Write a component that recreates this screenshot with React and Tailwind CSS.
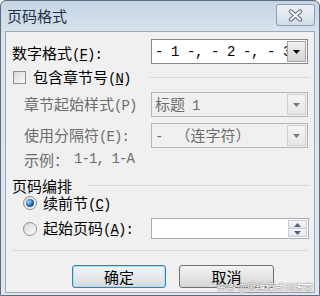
import React from "react";

const CJK = "font-['Noto_Sans_CJK_SC',sans-serif]";

function Lat({ children, className = "", wide = false }) {
  return (
    <span
      className={`font-['Liberation_Mono',monospace] text-[14px] ${wide ? "tracking-[-0.4px]" : "tracking-[-0.9px]"} ${className}`}
    >
      {children}
    </span>
  );
}

function Arrow({ color }) {
  return (
    <svg width="7" height="4" viewBox="0 0 7 4">
      <path d="M0 0h7L3.5 4z" fill={color} />
    </svg>
  );
}

function Combo({ children, disabled }) {
  return (
    <div
      className={`flex h-[25px] w-[157px] items-stretch border p-px ${
        disabled ? "border-[#b5b5b5] bg-[#f0f0f0] text-[#6d6d6d]" : "border-[#828790] bg-white text-black"
      }`}
    >
      <div className="flex min-w-0 flex-1 items-center overflow-hidden whitespace-nowrap pl-[2px]">{children}</div>
      <div
        className={`flex w-[19px] items-center justify-center border ${
          disabled
            ? "border-[#d0d0d0] bg-gradient-to-b from-[#f6f6f6] to-[#e6e6e6]"
            : "border-[#a3a3a3] bg-gradient-to-b from-[#f2f2f2] to-[#d3d3d3]"
        }`}
      >
        <Arrow color={disabled ? "#7a7a7a" : "#000"} />
      </div>
    </div>
  );
}

function Radio({ checked }) {
  return (
    <span className="flex h-[14px] w-[14px] shrink-0 items-center justify-center rounded-full border border-[#8c8f94] bg-gradient-to-br from-[#d8d8d8] to-[#fbfbfb]">
      {checked ? (
        <span className="h-[8px] w-[8px] rounded-full bg-[radial-gradient(circle_at_35%_35%,#9fd8ff,#1e64ad_55%,#0c3769)]" />
      ) : null}
    </span>
  );
}

function Check() {
  return (
    <span className="ml-px h-[13px] w-[13px] shrink-0 border border-[#8e8f8f] bg-gradient-to-br from-[#d9d9d9] to-[#fafafa]" />
  );
}

function Spinner() {
  return (
    <div className="flex w-[19px] flex-col">
      <div className="flex flex-1 items-center justify-center border border-[#c9ccd3] bg-gradient-to-b from-[#f8f8f8] to-[#e4e6ea]">
        <svg width="7" height="4" viewBox="0 0 7 4">
          <path d="M0 4h7L3.5 0z" fill="#4c5f83" />
        </svg>
      </div>
      <div className="flex flex-1 items-center justify-center border border-t-0 border-[#c9ccd3] bg-gradient-to-b from-[#f8f8f8] to-[#e4e6ea]">
        <Arrow color="#4c5f83" />
      </div>
    </div>
  );
}

export default function App() {
  return (
    <div className={`relative h-[296px] w-[320px] overflow-hidden ${CJK} text-[15px] leading-none text-black`}>
      <div className="flex h-full flex-col rounded-t-[6px] border border-[#5d6b7c] bg-gradient-to-b from-[#c6d5e6] via-[#dae3ed] via-[11%] to-[#dfe6ee] px-[4px] pb-[2px]">
        <div className="flex h-[30px] items-start justify-between">
          <span className="ml-[2px] mt-[7px] text-[15px] text-[#1f2f44]">页码格式</span>
          <button className="mt-[3px] flex h-[22px] w-[39px] items-center justify-center rounded-[3px] border border-[#8e9cb0] bg-gradient-to-b from-[#eef2f7] to-[#d3dde9]">
            <svg width="15" height="13" viewBox="0 0 15 13">
              <path d="M3 2.5l9 8M12 2.5l-9 8" stroke="#5b6a80" strokeWidth="4.2" strokeLinecap="round" />
              <path d="M3 2.5l9 8M12 2.5l-9 8" stroke="#ffffff" strokeWidth="2.2" strokeLinecap="round" />
            </svg>
          </button>
        </div>

        <div className="flex flex-1 flex-col border border-[#9faab8] bg-[#f0f0f0] px-[6px] pt-[7px]">
          <div className="flex h-[25px] items-center justify-between">
            <span className="pt-[3px]">
              数字格式<Lat>(<u>F</u>):</Lat>
            </span>
            <Combo>
              <Lat wide>- 1 -, - 2 -, - 3 -</Lat>
            </Combo>
          </div>

          <div className="flex h-[27px] items-center">
            <Check />
            <span className="ml-[7px]">
              包含章节号<Lat>(<u>N</u>)</Lat>
            </span>
            <div className="-mr-[2px] ml-auto h-px w-[160px] bg-[#d9d9d9]" />
          </div>

          <div className="mt-px flex h-[25px] items-center justify-between text-[#6d6d6d]">
            <span className="ml-[12px]">
              章节起始样式<Lat>(P)</Lat>
            </span>
            <Combo disabled>
              <span>
                标题<Lat className="ml-[7px]">1</Lat>
              </span>
            </Combo>
          </div>

          <div className="mt-[6px] flex h-[25px] items-center justify-between text-[#6d6d6d]">
            <span className="ml-[12px]">
              使用分隔符<Lat>(E):</Lat>
            </span>
            <Combo disabled>
              <span>
                <Lat>-</Lat>
                <span className="ml-[13px]">（连字符）</span>
              </span>
            </Combo>
          </div>

          <div className="mt-px flex h-[20px] items-center pl-[12px] text-[#6d6d6d]">
            <span>示例：</span>
            <Lat className="ml-[5px]">1-1, 1-A</Lat>
          </div>

          <div className="mt-[6px] flex h-[20px] items-center">
            <span>页码编排</span>
            <div className="-mr-[2px] ml-[15px] h-px flex-1 bg-[#d9d9d9]" />
          </div>

          <div className="flex h-[16px] items-center pl-[11px]">
            <Radio checked />
            <span className="ml-[6px]">
              续前节<Lat>(<u>C</u>)</Lat>
            </span>
          </div>

          <div className="mt-[7px] flex h-[21px] items-center justify-between">
            <div className="flex items-center pl-[11px]">
              <Radio />
              <span className="ml-[6px]">
                起始页码<Lat>(<u>A</u>):</Lat>
              </span>
            </div>
            <div className="-mr-px flex h-[21px] w-[158px] border border-[#a5acb5] bg-white p-px">
              <div className="flex-1" />
              <Spinner />
            </div>
          </div>

          <div className="mx-px mt-[11px] h-px bg-[#d9d9d9]" />

          <div className="ml-[60px] mt-[14px] flex gap-[13px]">
            <button className="flex h-[23px] w-[94px] items-center justify-center rounded-[3px] border border-[#3c7fb1] bg-gradient-to-b from-[#f4f6f8] to-[#d5dbe1] shadow-[inset_0_0_0_1px_#a9dcf7]">
              确定
            </button>
            <button className="flex h-[23px] w-[95px] items-center justify-center rounded-[3px] border border-[#707070] bg-gradient-to-b from-[#f3f3f3] to-[#d6d6d6]">
              取消
            </button>
          </div>
        </div>
      </div>

      <span className="absolute bottom-[4px] right-[7px] text-[9.5px] text-white [text-shadow:0_0_2px_#3a3a3a]">
        头条 @思维模式训练营
      </span>
    </div>
  );
}
